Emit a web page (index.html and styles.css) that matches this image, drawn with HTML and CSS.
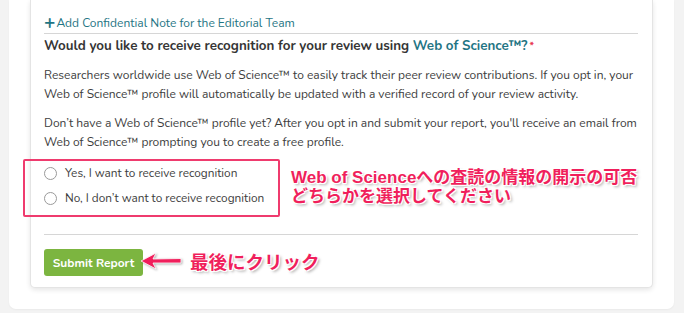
FILE: index.html
```html
<!DOCTYPE html>
<html>
<head>
<meta charset="utf-8">
<link rel="stylesheet" href="styles.css">
</head>
<body>
<div class="page">
  <div class="panel">
    <div class="card">
      <div class="note"><span class="plus">+</span>Add Confidential Note for the Editorial Team</div>
      <hr class="rule">
      <h2 class="question">Would you like to receive recognition for your review using <span class="brand">Web of Science™?</span><span class="req">*</span></h2>
      <p class="text">Researchers worldwide use Web of Science™ to easily track their peer review contributions. If you opt in, your Web of Science™ profile will automatically be updated with a verified record of your review activity.</p>
      <p class="text">Don’t have a Web of Science™ profile yet? After you opt in and submit your report, you'll receive an email from Web of Science™ prompting you to create a free profile.</p>
      <div class="choice-row">
        <div class="choices">
          <label class="option"><span class="radio"></span>Yes, I want to receive recognition</label>
          <label class="option"><span class="radio"></span>No, I don’t want to receive recognition</label>
        </div>
        <div class="callout">Web of Scienceへの査読の情報の開示の可否<br>どちらかを選択してください</div>
      </div>
      <hr class="rule rule-bottom">
      <div class="submit-row">
        <button class="submit">Submit Report</button>
        <svg class="arrow" width="42" height="20" viewBox="0 0 42 20"><path d="M1 10 L16 2 L13 8 L41 7.5 L41 12 L13 12 L16 18 Z" fill="#f01f5c" stroke="#fff" stroke-width="0.8"/></svg>
        <span class="click-label">最後にクリック</span>
      </div>
    </div>
  </div>
</div>
</body>
</html>
```
FILE: styles.css
```css
* { box-sizing: border-box; }
html, body { margin: 0; padding: 0; }
body {
  background: #f3f3f3;
  font-family: "Nunito", "Lato", "Noto Sans", sans-serif;
  color: #3a3a3a;
  width: 684px;
  height: 313px;
  overflow: hidden;
}
.page {
  padding: 0 10px 5px 9px;
}
.panel {
  background: #fff;
  border-radius: 0 0 7px 7px;
  padding: 0 21px 21px 21px;
  box-shadow: 0 1px 2px rgba(0,0,0,0.04);
}
.card {
  background: #fff;
  border: 1px solid #e4e4e4;
  border-top: none;
  border-radius: 0 0 5px 5px;
  box-shadow: 0 2px 5px rgba(0,0,0,0.10);
  padding: 14px 14px 11px 13px;
}
.note {
  font-size: 12px;
  line-height: 18px;
  color: #1f7584;
  display: flex;
  align-items: center;
}
.plus {
  font-size: 19px;
  font-weight: 700;
  margin-right: 1px;
  line-height: 18px;
}
.rule {
  border: none;
  border-top: 1px solid #d6d6d6;
  margin: 1px 0 0 0;
  height: 0;
}
.question {
  font-size: 13.4px;
  font-weight: 700;
  line-height: 20px;
  margin: 2px 0 10px 0;
  color: #353535;
}
.brand { color: #1f7584; }
.req {
  color: #e8384f;
  font-size: 10px;
  vertical-align: top;
  margin-left: 2px;
}
.text {
  font-size: 12px;
  line-height: 19px;
  margin: 0 0 10px 0;
  color: #3d3d3d;
}
.choice-row {
  display: flex;
  align-items: center;
  margin-top: -3px;
}
.choices {
  margin-left: -21px;
  width: 257px;
  border: 2px solid #ef3b6e;
  border-radius: 2px;
  padding: 1px 0 6px 19px;
  display: flex;
  flex-direction: column;
  gap: 3px;
}
.option {
  display: flex;
  align-items: center;
  height: 22px;
  font-size: 11.8px;
  color: #3d3d3d;
}
.radio {
  width: 13px;
  height: 13px;
  border: 1px solid #9a9a9a;
  border-radius: 50%;
  margin-right: 8px;
  background: #fff;
}
.callout {
  margin-left: 11px;
  margin-top: -3px;
  font-family: "Liberation Sans", "Noto Sans CJK JP", sans-serif;
  font-weight: 700;
  font-size: 17px;
  line-height: 19px;
  color: #f01f5c;
  text-shadow: 1px 1px 0 #fff, -1px -1px 0 #fff, 1px -1px 0 #fff, -1px 1px 0 #fff, 2px 2px 3px rgba(0,0,0,0.35);
}
.rule-bottom {
  margin-top: 17px;
}
.submit-row {
  display: flex;
  align-items: center;
  margin-top: 14px;
}
.submit {
  background: #7cb540;
  color: #fff;
  border: none;
  border-radius: 3px;
  font-family: "Nunito", "Lato", "Noto Sans", sans-serif;
  font-weight: 700;
  font-size: 12px;
  height: 27px;
  width: 99px;
  padding: 0;
}
.arrow {
  margin-left: -3px;
  margin-top: -4px;
  filter: drop-shadow(1px 1px 1px rgba(0,0,0,0.3));
}
.click-label {
  margin-left: 8px;
  font-family: "Noto Sans CJK JP", sans-serif;
  font-weight: 700;
  font-size: 18.5px;
  line-height: 22px;
  color: #f01f5c;
  margin-top: -3px;
  text-shadow: 1px 1px 0 #fff, -1px -1px 0 #fff, 1px -1px 0 #fff, -1px 1px 0 #fff, 2px 2px 3px rgba(0,0,0,0.35);
}
```
